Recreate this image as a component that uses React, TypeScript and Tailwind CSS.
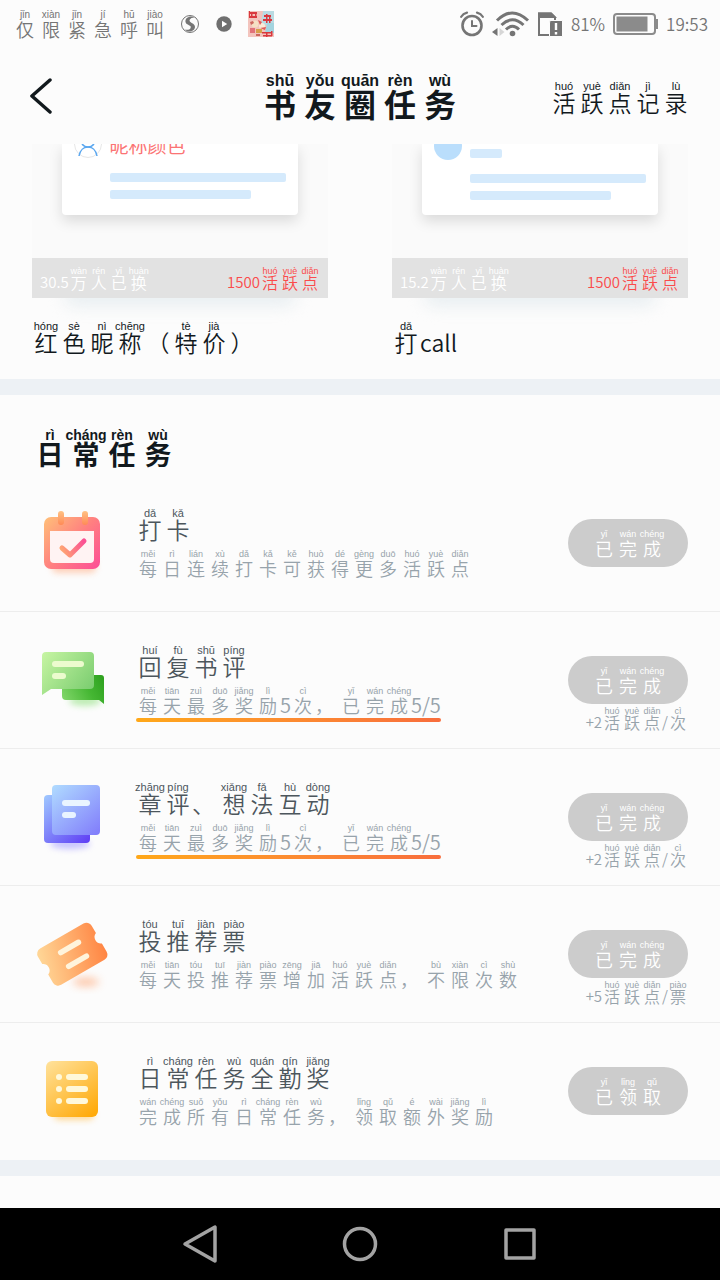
import type { ReactNode } from "react";

type Size = "status" | "heading" | "section" | "body" | "sub" | "small";

interface PinyinProps {
  text: string;
  pinyin: string;
  size: Size;
}

interface Reward {
  name: string;
  pinyin: string;
  price: string;
  redeemed: string;
  preview: ReactNode;
}

interface Task {
  icon: ReactNode;
  title: string;
  titlePinyin: string;
  desc: string;
  descPinyin: string;
  action: string;
  actionPinyin: string;
  bonus?: string;
  bonusPinyin?: string;
  underlined?: boolean;
}

const SIZES: Record<Size, { cell: string; glyph: string; rt: string; latin: string }> = {
  status: { cell: "w-[26px]", glyph: "text-[18px] leading-[18px]", rt: "text-[10px] leading-[10px]", latin: "text-[18px] leading-[18px]" },
  heading: { cell: "w-10", glyph: "text-[32px] leading-[30px] font-bold", rt: "text-[16px] leading-[14px] font-bold", latin: "text-[32px] leading-[30px]" },
  section: { cell: "w-9", glyph: "text-[27px] leading-[26px] font-bold", rt: "text-[14px] leading-3 font-bold", latin: "text-[27px] leading-[26px]" },
  body: { cell: "w-7", glyph: "text-[23px] leading-5", rt: "text-[11px] leading-3", latin: "text-[23px] leading-5" },
  sub: { cell: "w-6", glyph: "text-[18px] leading-[18px]", rt: "text-[9px] leading-[10px]", latin: "text-[20px] leading-[18px]" },
  small: { cell: "w-5", glyph: "text-[16px] leading-[14px]", rt: "text-[9px] leading-2", latin: "text-[15px] leading-[14px]" },
};

const HAN = /[\u4e00-\u9fff]/;
const WIDE = /[\u3000-\u303f\uff00-\uffef]/;

// Sets each Chinese character in its own cell with the reading above it
function Pinyin({ text, pinyin, size }: PinyinProps) {
  const s = SIZES[size];
  const readings = pinyin.split(" ");
  const parts = text.match(/[\u3000-\u303f\u4e00-\u9fff\uff00-\uffef]|[^\u3000-\u303f\u4e00-\u9fff\uff00-\uffef]+/g) ?? [];
  let next = 0;

  return (
    <span className="flex items-end whitespace-nowrap">
      {parts.map((part, i) => {
        if (HAN.test(part)) {
          return (
            <ruby key={i} className={`flex flex-col-reverse items-center ${s.cell} ${s.glyph}`}>
              {part}
              <rt className={`block font-['Liberation_Sans',sans-serif] ${s.rt}`}>{readings[next++]}</rt>
            </ruby>
          );
        }
        if (WIDE.test(part)) {
          return <span key={i} className={`${/[，、]/.test(part) ? "text-left" : "text-center"} ${s.cell} ${s.glyph}`}>{part}</span>;
        }
        return <span key={i} className={s.latin}>{part}</span>;
      })}
    </span>
  );
}

const AlarmIcon = () => (
  <svg width="24" height="26" viewBox="0 0 24 26" fill="none" stroke="#757575" strokeLinecap="round">
    <circle cx="12" cy="14.500" r="9.500" strokeWidth="2.600" />
    <path d="M12 10v5h4.500" strokeWidth="2" />
    <path d="M1.200 5.800Q3 2.600 7 1.600M22.800 5.800Q21 2.600 17 1.600" strokeWidth="2.200" />
  </svg>
);

const WifiIcon = () => (
  <svg width="38" height="26" viewBox="0 0 38 26" fill="none" stroke="#757575" strokeWidth="3">
    <path d="M5 9.500Q20-5.500 36 9.500" />
    <path d="M9.500 14Q20.500 3.500 31.500 14" />
    <path d="M14 18.500Q20.500 12 27 18.500" />
    <circle cx="20.500" cy="22.500" r="2.800" fill="#757575" stroke="none" />
    <path d="M5.500 17v8L0 21z" fill="#757575" stroke="none" />
    <path d="M7.500 17v8L12.500 21z" fill="#d6d6d6" stroke="none" />
  </svg>
);

const SimIcon = () => (
  <svg width="25" height="25" viewBox="0 0 25 25" fill="none">
    <path d="M1 6v17h16V5.500L13 1.500H1z" stroke="#757575" strokeWidth="2" />
    <path d="M0 .500h13.500L19 6H0z" fill="#757575" />
    <path d="M12 8.500h12.500v16H11.500V11z" fill="#757575" stroke="#fcfcfc" />
    <path d="M18 11v7M18 20v2.500" stroke="#fff" strokeWidth="2.400" />
  </svg>
);

const BatteryIcon = () => (
  <svg width="45" height="24" viewBox="0 0 45 24" fill="none">
    <rect x="1" y="2" width="41" height="20" rx="3" stroke="#8b8b8b" strokeWidth="2" />
    <rect x="3.500" y="4.500" width="31" height="15" fill="#8b8b8b" />
    <path d="M43 7h2v10h-2z" fill="#8b8b8b" />
  </svg>
);

const SwirlIcon = () => (
  <svg width="20" height="20" viewBox="0 0 20 20">
    <circle cx="10" cy="10" r="8.500" fill="none" stroke="#757575" strokeWidth="1" />
    <path d="M14.500 3.200C10 1 4.800 3.500 5.500 8c.7 3.500 6.800 2.800 5 6.200-.8 1.600-3.500 1.700-5.600 1.200C8.500 19.500 14.600 17.400 15 13c.3-4-6.200-4-5.400-7 .5-1.900 3-2.300 4.900-2.800z" fill="#757575" />
  </svg>
);

const PlayIcon = () => (
  <svg width="16" height="16" viewBox="0 0 16 16">
    <circle cx="8" cy="8" r="7.700" fill="#6f6f6f" />
    <path d="M6 4.800l5.200 3.200L6 11.200z" fill="#fff" />
  </svg>
);

const GameIcon = () => (
  <svg width="26" height="26" viewBox="0 0 26 26">
    <path d="M0 0h26v26H0z" fill="#f3c4bd" />
    <path d="M15 0h11v14H13z" fill="#b9dbe2" />
    <path d="M19 12h7v10h-9z" fill="#a3d4df" />
    <path d="M2 1h7v2H2zM2 5h7v2H2zM3 1h1.500v6H3zM7 1h1.500v6H7zM1 0h1v7H1zM16 4h7v2h-7zM15 8h9v2h-9zM18 3h1.500v9H18zM21 4h1.500v8H21zM14 21h10v1.500H14zM15 24h9v1.500h-9zM18 21h1.500v5H18zM23 20h1.500v5H23z" fill="#d9383e" />
    <circle cx="7" cy="13" r="3.500" fill="#f6e1c4" />
    <circle cx="14" cy="15" r="3" fill="#fae9d5" />
    <path d="M2 17h5v5H2z" fill="#e2737a" />
    <path d="M8 18h6v4H8z" fill="#d7a04b" />
    <path d="M10 9l4 2-2 3zM12 17l6-1-1 3z" fill="#df5a56" />
    <path d="M2 11l3-1 1 2-3 2zM8 23h4v2H8z" fill="#cd685e" />
  </svg>
);

const BackIcon = () => (
  <svg width="24" height="38" viewBox="0 0 24 38" fill="none" stroke="#12191d" strokeWidth="3.400" strokeLinecap="round" strokeLinejoin="round">
    <path d="M20 3L1.900 19 20 35" />
  </svg>
);

const CalendarIcon = () => (
  <svg width="80" height="80" viewBox="0 0 80 80" fill="none">
    <defs>
      <linearGradient id="cal" x1="12" y1="14" x2="68" y2="66" gradientUnits="userSpaceOnUse">
        <stop stopColor="#ffc078" />
        <stop offset=".5" stopColor="#ff8080" />
        <stop offset="1" stopColor="#fd4c97" />
      </linearGradient>
      <linearGradient id="calTick" x1="28" y1="50" x2="52" y2="40" gradientUnits="userSpaceOnUse">
        <stop stopColor="#ffad70" />
        <stop offset="1" stopColor="#fb5193" />
      </linearGradient>
      <linearGradient id="calPin" x1="0" y1="8" x2="0" y2="22" gradientUnits="userSpaceOnUse">
        <stop stopColor="#ffc284" />
        <stop offset="1" stopColor="#ff8a56" />
      </linearGradient>
      <filter id="calBlur" x="-50%" y="-100%" width="200%" height="300%"><feGaussianBlur stdDeviation="3" /></filter>
    </defs>
    <rect x="20" y="56" width="44" height="14" rx="5" fill="#ffb38c" opacity=".6" filter="url(#calBlur)" />
    <rect x="12" y="14" width="56" height="52" rx="7" fill="url(#cal)" />
    <path d="M18 28h44v28a4 4 0 0 1-4 4H22a4 4 0 0 1-4-4z" fill="#fff3f3" />
    <rect x="26" y="8" width="6" height="14" rx="3" fill="url(#calPin)" />
    <rect x="50" y="8" width="6" height="14" rx="3" fill="url(#calPin)" />
    <path d="M30 45l8 7 14-14" stroke="url(#calTick)" strokeWidth="5" strokeLinecap="round" strokeLinejoin="round" />
  </svg>
);

const ChatIcon = () => (
  <svg width="80" height="80" viewBox="0 0 80 80">
    <defs>
      <linearGradient id="chat" x1="10" y1="12" x2="60" y2="50" gradientUnits="userSpaceOnUse">
        <stop stopColor="#c7f5a3" />
        <stop offset="1" stopColor="#7bcd70" />
      </linearGradient>
      <linearGradient id="chatBack" x1="32" y1="60" x2="72" y2="40" gradientUnits="userSpaceOnUse">
        <stop stopColor="#7fd568" />
        <stop offset=".6" stopColor="#45b733" />
        <stop offset="1" stopColor="#2fa220" />
      </linearGradient>
      <filter id="chatBlur" x="-50%" y="-100%" width="200%" height="300%"><feGaussianBlur stdDeviation="3" /></filter>
    </defs>
    <ellipse cx="53" cy="61" rx="16" ry="5" fill="#7bdc68" opacity=".5" filter="url(#chatBlur)" />
    <path d="M34 35h35a3 3 0 0 1 3 3v26l-5-4H34a4 4 0 0 1-4-4V39a4 4 0 0 1 4-4z" fill="url(#chatBack)" />
    <path d="M14 12h44a4 4 0 0 1 4 4v29a4 4 0 0 1-4 4H19l-9 6V16a4 4 0 0 1 4-4z" fill="url(#chat)" />
    <rect x="20" y="21" width="32" height="6" rx="3" fill="#ecfbce" />
    <rect x="20" y="33" width="14" height="6" rx="3" fill="#ecfbce" />
  </svg>
);

const NotesIcon = () => (
  <svg width="80" height="80" viewBox="0 0 80 80">
    <defs>
      <linearGradient id="note" x1="20" y1="8" x2="66" y2="60" gradientUnits="userSpaceOnUse">
        <stop stopColor="#b0dcff" />
        <stop offset="1" stopColor="#807bfb" />
      </linearGradient>
      <linearGradient id="noteBack" x1="12" y1="18" x2="54" y2="66" gradientUnits="userSpaceOnUse">
        <stop stopColor="#a0c9ff" />
        <stop offset="1" stopColor="#6041f5" />
      </linearGradient>
      <filter id="noteBlur" x="-50%" y="-100%" width="200%" height="300%"><feGaussianBlur stdDeviation="3" /></filter>
    </defs>
    <ellipse cx="38" cy="67" rx="20" ry="5" fill="#8f86ff" opacity=".5" filter="url(#noteBlur)" />
    <rect x="12" y="18" width="46" height="48" rx="4" fill="url(#noteBack)" />
    <rect x="20" y="8" width="48" height="50" rx="4" fill="url(#note)" />
    <rect x="30" y="23" width="28" height="6" rx="3" fill="#e9f4ff" />
    <rect x="30" y="35" width="14" height="6" rx="3" fill="#e9f4ff" />
  </svg>
);

const TicketIcon = () => (
  <svg width="80" height="80" viewBox="0 0 80 80">
    <defs>
      <linearGradient id="ticket" x1="9" y1="30" x2="72" y2="50" gradientUnits="userSpaceOnUse">
        <stop stopColor="#ffd595" />
        <stop offset="1" stopColor="#ff8543" />
      </linearGradient>
      <filter id="ticketBlur" x="-50%" y="-100%" width="200%" height="300%"><feGaussianBlur stdDeviation="4" /></filter>
    </defs>
    <ellipse cx="54" cy="68" rx="13" ry="4" fill="#ff9a62" opacity=".6" filter="url(#ticketBlur)" />
    <g transform="rotate(-30 40.500 39.500)">
      <path d="M15 19h50a6 6 0 0 1 6 6v8.500a6.500 6.500 0 0 0 0 12V55a6 6 0 0 1-6 6H15a6 6 0 0 1-6-6v-9.500a6.500 6.500 0 0 0 0-12V25a6 6 0 0 1 6-6z" fill="url(#ticket)" />
      <rect x="28" y="30" width="26" height="5.500" rx="2.700" fill="#fff4dc" />
      <rect x="28" y="46" width="26" height="5.500" rx="2.700" fill="#fff4dc" />
    </g>
  </svg>
);

const ListIcon = () => (
  <svg width="80" height="80" viewBox="0 0 80 80">
    <defs>
      <linearGradient id="list" x1="16" y1="10" x2="58" y2="66" gradientUnits="userSpaceOnUse">
        <stop stopColor="#ffe19a" />
        <stop offset="1" stopColor="#ffaa0a" />
      </linearGradient>
      <filter id="listBlur" x="-50%" y="-100%" width="200%" height="300%"><feGaussianBlur stdDeviation="3" /></filter>
    </defs>
    <rect x="22" y="58" width="40" height="11" rx="5" fill="#ffcb70" opacity=".7" filter="url(#listBlur)" />
    <rect x="14" y="10" width="52" height="56" rx="6" fill="url(#list)" />
    {[26, 38, 50].map((y) => (
      <g key={y} fill="#fff8da">
        <circle cx="27" cy={y} r="3" />
        <rect x="34" y={y - 3} width="22" height="6" rx="3" />
      </g>
    ))}
  </svg>
);

const Avatar = () => (
  <svg width="28" height="28" viewBox="0 0 28 28" fill="none">
    <circle cx="14" cy="12" r="13.500" fill="#fff" stroke="#e6e6e6" />
    <path d="M5 24c1-6 5-9 9-9s8 3 9 9" stroke="#5ba7ef" strokeWidth="1.500" />
    <path d="M7 9c2 8 12 8 14 0" stroke="#5ba7ef" strokeWidth="1.500" />
  </svg>
);

const PreviewLines = () => (
  <div className="flex flex-col gap-2">
    <div className="h-[9px] w-full rounded-xs bg-[#d5eafc]" />
    <div className="h-[9px] w-4/5 rounded-xs bg-[#d5eafc]" />
  </div>
);

const REWARDS: Reward[] = [
  {
    name: "红色昵称（特价）",
    pinyin: "hóng sè nì chēng tè jià",
    price: "1500活跃点",
    redeemed: "30.5万人已换",
    preview: (
      <>
        <Avatar />
        <div className="flex flex-1 flex-col gap-4">
          <p className="text-[19px] leading-[25px] font-normal text-[#fb7474]">昵称颜色</p>
          <PreviewLines />
        </div>
      </>
    ),
  },
  {
    name: "打call",
    pinyin: "dǎ",
    price: "1500活跃点",
    redeemed: "15.2万人已换",
    preview: (
      <>
        <div className="size-7 rounded-full bg-[#badefc]" />
        <div className="flex flex-1 flex-col gap-4">
          <div className="mt-[17px] h-[9px] w-8 rounded-xs bg-[#d5eafc]" />
          <PreviewLines />
        </div>
      </>
    ),
  },
];

const TASKS: Task[] = [
  {
    icon: <CalendarIcon />,
    title: "打卡",
    titlePinyin: "dǎ kǎ",
    desc: "每日连续打卡可获得更多活跃点",
    descPinyin: "měi rì lián xù dǎ kǎ kě huò dé gèng duō huó yuè diǎn",
    action: "已完成",
    actionPinyin: "yǐ wán chéng",
  },
  {
    icon: <ChatIcon />,
    title: "回复书评",
    titlePinyin: "huí fù shū píng",
    desc: "每天最多奖励5次，已完成5/5",
    descPinyin: "měi tiān zuì duō jiǎng lì cì yǐ wán chéng",
    action: "已完成",
    actionPinyin: "yǐ wán chéng",
    bonus: "+2活跃点/次",
    bonusPinyin: "huó yuè diǎn cì",
    underlined: true,
  },
  {
    icon: <NotesIcon />,
    title: "章评、想法互动",
    titlePinyin: "zhāng píng xiǎng fǎ hù dòng",
    desc: "每天最多奖励5次，已完成5/5",
    descPinyin: "měi tiān zuì duō jiǎng lì cì yǐ wán chéng",
    action: "已完成",
    actionPinyin: "yǐ wán chéng",
    bonus: "+2活跃点/次",
    bonusPinyin: "huó yuè diǎn cì",
    underlined: true,
  },
  {
    icon: <TicketIcon />,
    title: "投推荐票",
    titlePinyin: "tóu tuī jiàn piào",
    desc: "每天投推荐票增加活跃点，不限次数",
    descPinyin: "měi tiān tóu tuī jiàn piào zēng jiā huó yuè diǎn bù xiàn cì shù",
    action: "已完成",
    actionPinyin: "yǐ wán chéng",
    bonus: "+5活跃点/票",
    bonusPinyin: "huó yuè diǎn piào",
  },
  {
    icon: <ListIcon />,
    title: "日常任务全勤奖",
    titlePinyin: "rì cháng rèn wù quán qín jiǎng",
    desc: "完成所有日常任务，领取额外奖励",
    descPinyin: "wán chéng suǒ yǒu rì cháng rèn wù lǐng qǔ é wài jiǎng lì",
    action: "已领取",
    actionPinyin: "yǐ lǐng qǔ",
  },
];

function StatusBar() {
  return (
    <div className="flex h-12 items-center justify-between px-3 text-[#757575]">
      <div className="flex items-center">
        <Pinyin text="仅限紧急呼叫" pinyin="jǐn xiàn jǐn jí hū jiào" size="status" />
        <div className="ml-3 flex items-center gap-4">
          <SwirlIcon />
          <PlayIcon />
          <GameIcon />
        </div>
      </div>
      <div className="flex items-center gap-2 text-[17px]">
        <AlarmIcon />
        <WifiIcon />
        <SimIcon />
        <span>81%</span>
        <BatteryIcon />
        <span>19:53</span>
      </div>
    </div>
  );
}

function RewardCard({ reward }: { reward: Reward }) {
  return (
    <a href="#reward" className="flex min-w-0 flex-col">
      <div className="relative">
        <div className="absolute inset-x-8 -bottom-2 h-5 rounded-full bg-[#e8eef1] blur-sm" />
        <div className="relative flex h-[154px] flex-col items-center justify-between overflow-hidden bg-[#fafafa]">
          <div className="flex h-[71px] w-4/5 rounded-b bg-white shadow-[0_6px_14px_rgba(0,0,0,0.13)]">
            <div className="-mt-3 flex flex-1 items-start gap-2 px-3">{reward.preview}</div>
          </div>
          <div className="flex h-10 w-full items-center justify-between bg-[#e2e2e2] px-2">
            <span className="text-white">
              <Pinyin text={reward.redeemed} pinyin="wàn rén yǐ huàn" size="small" />
            </span>
            <span className="text-[#fb4b4b]">
              <Pinyin text={reward.price} pinyin="huó yuè diǎn" size="small" />
            </span>
          </div>
        </div>
      </div>
      <div className="mt-[22px] text-[#12191d]">
        <Pinyin text={reward.name} pinyin={reward.pinyin} size="body" />
      </div>
    </a>
  );
}

function TaskRow({ task }: { task: Task }) {
  return (
    <li className="flex min-h-[137px] px-8">
      <div className="mt-7 w-26 shrink-0">{task.icon}</div>
      <div className="flex min-w-0 flex-1 flex-col items-start gap-[10px] pt-8">
        <h3 className="text-[#4c565c]">
          <Pinyin text={task.title} pinyin={task.titlePinyin} size="body" />
        </h3>
        <div className="flex flex-col gap-1 text-[#97a3ab]">
          <p>
            <Pinyin text={task.desc} pinyin={task.descPinyin} size="sub" />
          </p>
          {task.underlined && <div className="h-1 rounded-full bg-linear-to-r from-[#ffa818] to-[#f86d3c]" />}
        </div>
      </div>
      <div className="flex w-30 shrink-0 flex-col items-end gap-[3px] pt-11">
        <button className="flex h-12 w-full items-center justify-center rounded-full bg-[#cccccc] text-white">
          <Pinyin text={task.action} pinyin={task.actionPinyin} size="sub" />
        </button>
        {task.bonus && (
          <p className="text-[#97a3ab]">
            <Pinyin text={task.bonus} pinyin={task.bonusPinyin ?? ""} size="small" />
          </p>
        )}
      </div>
    </li>
  );
}

export default function App() {
  return (
    <div lang="zh-CN" className="flex min-h-screen flex-col bg-[#fcfcfc] font-['Noto_Sans_CJK_SC',sans-serif] font-[350]">
      <StatusBar />
      <header className="grid h-24 grid-cols-[1fr_auto_1fr] items-center px-[30px] text-[#12191d]">
        <button aria-label="返回" className="justify-self-start">
          <BackIcon />
        </button>
        <h1>
          <Pinyin text="书友圈任务" pinyin="shū yǒu quān rèn wù" size="heading" />
        </h1>
        <a href="#records" className="justify-self-end">
          <Pinyin text="活跃点记录" pinyin="huó yuè diǎn jì lù" size="body" />
        </a>
      </header>

      <main className="flex flex-1 flex-col">
        <section className="grid grid-cols-2 gap-16 px-8 pb-[27px]">
          {REWARDS.map((reward) => (
            <RewardCard key={reward.name} reward={reward} />
          ))}
        </section>
        <section className="border-y-16 border-[#edf1f5]">
          <h2 className="flex h-20 items-end pb-2 pl-8 text-[#12191d]">
            <Pinyin text="日常任务" pinyin="rì cháng rèn wù" size="section" />
          </h2>
          <ul className="divide-y divide-[#ededed]">
            {TASKS.map((task) => (
              <TaskRow key={task.title} task={task} />
            ))}
          </ul>
        </section>
      </main>

      <nav className="flex h-18 items-center justify-center gap-[124px] bg-black">
        <button aria-label="后退">
          <svg width="36" height="40" viewBox="0 0 36 40" fill="none" stroke="#a3a3a3" strokeWidth="3.500" strokeLinejoin="round">
            <path d="M33 3v34L3 20z" />
          </svg>
        </button>
        <button aria-label="主页">
          <svg width="36" height="36" viewBox="0 0 36 36" fill="none" stroke="#a3a3a3" strokeWidth="3.500">
            <circle cx="18" cy="18" r="15.500" />
          </svg>
        </button>
        <button aria-label="最近任务">
          <svg width="36" height="36" viewBox="0 0 36 36" fill="none" stroke="#a3a3a3" strokeWidth="3.500" strokeLinejoin="round">
            <rect x="4" y="4" width="28" height="28" />
          </svg>
        </button>
      </nav>
    </div>
  );
}
